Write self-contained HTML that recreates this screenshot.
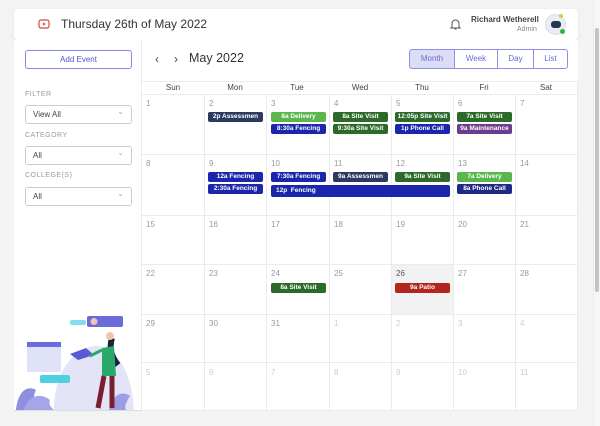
<!DOCTYPE html>
<html><head><style>
*{box-sizing:border-box;margin:0;padding:0}
body{width:600px;height:426px;background:#f3f3f3;font-family:"Liberation Sans",sans-serif;position:relative;overflow:hidden;color:#333}
.abs{position:absolute}
.hdr{left:14px;top:9px;width:564px;height:31px;background:#fff;border-radius:4px;box-shadow:0 1px 3px rgba(0,0,0,.08)}
.main{left:14px;top:40px;width:564px;height:371px;background:#fff}
.side{left:14px;top:40px;width:128px;height:371px;background:#fff;border-right:1px solid #ececec}
.lbl{font-size:7px;color:#999;letter-spacing:.5px}
.sel{width:107px;height:19px;border:1px solid #ccc;border-radius:3px;font-size:8px;padding:4px 7px;color:#444}
.sel:after{content:"⌄";position:absolute;right:7px;top:1px;color:#aaa;font-size:8px}
.vl{width:1px;background:#ebebeb}
.hl{height:1px;background:#ebebeb;left:142px;width:436px}
.dn{font-size:8px;color:#999}
.dn.o{color:#ccc}
.ev{height:10px;border-radius:2px;color:#fff;font-size:6.5px;font-weight:bold;text-align:center;line-height:10px;overflow:hidden;white-space:nowrap}
.g{background:#2b6a29}.lg{background:#5bb64e}.b{background:#1b26ad}.n{background:#2c3a5f}.p{background:#6c3d8e}.r{background:#b2261d}
.btn{top:49px;height:20px;border:1px solid #8f8fe6;font-size:8px;color:#6a6ad6;text-align:center;line-height:18px}
.dh{top:83px;font-size:8px;color:#444;width:62px;text-align:center}
</style></head><body>
<div class="abs hdr"></div>
<svg class="abs" style="left:38px;top:19px" width="12" height="10" viewBox="0 0 12 10"><rect x="1" y="1" width="10" height="8" rx="2" fill="none" stroke="#d9463e" stroke-width="1.2"/><path d="M5 3.3L7.6 5L5 6.7Z" fill="#d9463e"/></svg>
<div class="abs" style="left:61px;top:17px;font-size:12px;color:#333">Thursday 26th of May 2022</div>
<svg class="abs" style="left:450px;top:18px" width="11" height="12" viewBox="0 0 11 12"><path d="M2 9V5.5a3.5 3.5 0 0 1 7 0V9l1 1H1z M4.5 11h2" fill="none" stroke="#555" stroke-width="1"/></svg>
<div class="abs" style="left:471px;top:15px;font-size:8px;font-weight:bold;color:#444">Richard Wetherell</div>
<div class="abs" style="left:517px;top:26px;font-size:7px;color:#888">Admin</div>
<div class="abs" style="left:545px;top:14px;width:21px;height:21px;border-radius:50%;background:#e8eef2;border:1px solid #ddd"></div>
<div class="abs" style="left:551px;top:21px;width:10px;height:7px;border-radius:3px;background:#26364f"></div>
<div class="abs" style="left:559px;top:14px;width:4px;height:4px;border-radius:50%;background:#e6c53a"></div>
<div class="abs" style="left:560px;top:29px;width:5px;height:5px;border-radius:50%;background:#2bb34a"></div>
<div class="abs main"></div>
<div class="abs side"></div>
<div class="abs" style="left:25px;top:50px;width:107px;height:19px;border:1px solid #7f88e6;border-radius:3px;font-size:8px;color:#4a55d8;text-align:center;line-height:17px">Add Event</div>
<div class="abs lbl" style="left:25px;top:91px">FILTER</div>
<div class="abs sel" style="left:25px;top:105px">View All</div>
<div class="abs lbl" style="left:25px;top:132px">CATEGORY</div>
<div class="abs sel" style="left:25px;top:146px">All</div>
<div class="abs lbl" style="left:25px;top:172px">COLLEGE(S)</div>
<div class="abs sel" style="left:25px;top:187px">All</div>
<svg class="abs" style="left:14px;top:310px" width="128" height="101" viewBox="0 0 128 101">
<path d="M40 100C40 60 60 40 80 36C100 34 118 60 120 100Z" fill="#e4e4f8"/>
<path d="M2 100C4 80 14 75 22 80C18 88 20 95 30 100Z" fill="#8f8fe0"/>
<path d="M10 100C14 86 26 82 36 90C34 95 38 98 40 100Z" fill="#a5a5ea"/>
<path d="M95 100C98 85 108 80 116 86C112 92 110 97 112 100Z" fill="#9d9de6"/>
<rect x="73" y="6" width="36" height="11" rx="2" fill="#6b6bdc"/>
<circle cx="80" cy="11.5" r="3.5" fill="#f1c6a8"/>
<rect x="13" y="32" width="34" height="30" rx="2" fill="#dfe2f6"/>
<rect x="13" y="32" width="34" height="5" fill="#6b6bdc"/>
<rect x="26" y="65" width="30" height="8" rx="2" fill="#4dd0e1"/>
<rect x="56" y="10" width="16" height="5" rx="2" fill="#4dd0e1" opacity=".7"/>
<path d="M56 44L72 38L80 45L64 50Z" fill="#5a5ad6"/>
<path d="M98 28C94 40 100 50 104 55" stroke="#1f1f3a" stroke-width="6" fill="none"/>
<circle cx="96" cy="26" r="4" fill="#f1c6a8"/>
<path d="M88 38L100 36L102 66L88 66Z" fill="#2aa86a"/>
<path d="M88 40L76 46" stroke="#2aa86a" stroke-width="3"/>
<path d="M90 66L84 98M98 66L98 98" stroke="#7a1f2e" stroke-width="5"/>
<rect x="0" y="100" width="128" height="1" fill="#ddd"/>
</svg>
<div class="abs" style="left:155px;top:52px;font-size:12px;color:#444">‹</div>
<div class="abs" style="left:174px;top:52px;font-size:12px;color:#444">›</div>
<div class="abs" style="left:189px;top:51px;font-size:12.5px;color:#333">May 2022</div>
<div class="abs btn" style="left:409px;width:46px;background:#dcdcf6;border-radius:3px 0 0 3px">Month</div>
<div class="abs btn" style="left:454px;width:44px">Week</div>
<div class="abs btn" style="left:497px;width:37px">Day</div>
<div class="abs btn" style="left:533px;width:35px;border-radius:0 3px 3px 0">List</div>
<div class="abs hl" style="top:81px"></div>
<div class="abs hl" style="top:94px"></div>
<div class="abs hl" style="top:154px"></div>
<div class="abs hl" style="top:215px"></div>
<div class="abs hl" style="top:264px"></div>
<div class="abs hl" style="top:314px"></div>
<div class="abs hl" style="top:362px"></div>
<div class="abs hl" style="top:410px"></div>
<div class="abs" style="left:391px;top:265px;width:62px;height:49px;background:#f2f2f2"></div>
<div class="abs vl" style="left:204px;top:94px;height:317px"></div>
<div class="abs vl" style="left:266px;top:94px;height:317px"></div>
<div class="abs vl" style="left:329px;top:94px;height:317px"></div>
<div class="abs vl" style="left:391px;top:94px;height:317px"></div>
<div class="abs vl" style="left:453px;top:94px;height:317px"></div>
<div class="abs vl" style="left:515px;top:94px;height:317px"></div>
<div class="abs vl" style="left:577px;top:81px;height:330px"></div>
<div class="abs dh" style="left:142px">Sun</div><div class="abs dh" style="left:204px">Mon</div><div class="abs dh" style="left:266px">Tue</div><div class="abs dh" style="left:329px">Wed</div><div class="abs dh" style="left:391px">Thu</div><div class="abs dh" style="left:453px">Fri</div><div class="abs dh" style="left:515px">Sat</div>
<div class="abs dn" style="left:146px;top:99px">1</div><div class="abs dn" style="left:209px;top:99px">2</div><div class="abs dn" style="left:271px;top:99px">3</div><div class="abs dn" style="left:334px;top:99px">4</div><div class="abs dn" style="left:396px;top:99px">5</div><div class="abs dn" style="left:458px;top:99px">6</div><div class="abs dn" style="left:520px;top:99px">7</div>
<div class="abs dn" style="left:146px;top:159px">8</div><div class="abs dn" style="left:209px;top:159px">9</div><div class="abs dn" style="left:271px;top:159px">10</div><div class="abs dn" style="left:334px;top:159px">11</div><div class="abs dn" style="left:396px;top:159px">12</div><div class="abs dn" style="left:458px;top:159px">13</div><div class="abs dn" style="left:520px;top:159px">14</div>
<div class="abs dn" style="left:146px;top:220px">15</div><div class="abs dn" style="left:209px;top:220px">16</div><div class="abs dn" style="left:271px;top:220px">17</div><div class="abs dn" style="left:334px;top:220px">18</div><div class="abs dn" style="left:396px;top:220px">19</div><div class="abs dn" style="left:458px;top:220px">20</div><div class="abs dn" style="left:520px;top:220px">21</div>
<div class="abs dn" style="left:146px;top:269px">22</div><div class="abs dn" style="left:209px;top:269px">23</div><div class="abs dn" style="left:271px;top:269px">24</div><div class="abs dn" style="left:334px;top:269px">25</div><div class="abs dn" style="left:396px;top:269px;color:#555">26</div><div class="abs dn" style="left:458px;top:269px">27</div><div class="abs dn" style="left:520px;top:269px">28</div>
<div class="abs dn" style="left:146px;top:319px">29</div><div class="abs dn" style="left:209px;top:319px">30</div><div class="abs dn" style="left:271px;top:319px">31</div><div class="abs dn o" style="left:334px;top:319px">1</div><div class="abs dn o" style="left:396px;top:319px">2</div><div class="abs dn o" style="left:458px;top:319px">3</div><div class="abs dn o" style="left:520px;top:319px">4</div>
<div class="abs dn o" style="left:146px;top:368px">5</div><div class="abs dn o" style="left:209px;top:368px">6</div><div class="abs dn o" style="left:271px;top:368px">7</div><div class="abs dn o" style="left:334px;top:368px">8</div><div class="abs dn o" style="left:396px;top:368px">9</div><div class="abs dn o" style="left:458px;top:368px">10</div><div class="abs dn o" style="left:520px;top:368px">11</div>
<div class="abs ev n" style="left:208px;top:112px;width:55px">2p Assessmen</div>
<div class="abs ev lg" style="left:271px;top:112px;width:55px">8a Delivery</div>
<div class="abs ev b" style="left:271px;top:124px;width:55px">8:30a Fencing</div>
<div class="abs ev g" style="left:333px;top:112px;width:55px">8a Site Visit</div>
<div class="abs ev g" style="left:333px;top:124px;width:55px">9:30a Site Visit</div>
<div class="abs ev g" style="left:395px;top:112px;width:55px">12:05p Site Visit</div>
<div class="abs ev b" style="left:395px;top:124px;width:55px">1p Phone Call</div>
<div class="abs ev g" style="left:457px;top:112px;width:55px">7a Site Visit</div>
<div class="abs ev p" style="left:457px;top:124px;width:55px">9a Maintenance</div>
<div class="abs ev b" style="left:208px;top:172px;width:55px">12a Fencing</div>
<div class="abs ev b" style="left:208px;top:184px;width:55px">2:30a Fencing</div>
<div class="abs ev b" style="left:271px;top:172px;width:55px">7:30a Fencing</div>
<div class="abs ev b" style="left:271px;top:185px;width:179px;height:12px;line-height:12px;text-align:left;padding-left:5px">12p &nbsp;Fencing</div>
<div class="abs ev n" style="left:333px;top:172px;width:55px">9a Assessmen</div>
<div class="abs ev g" style="left:395px;top:172px;width:55px">9a Site Visit</div>
<div class="abs ev lg" style="left:457px;top:172px;width:55px">7a Delivery</div>
<div class="abs ev b" style="left:457px;top:184px;width:55px;background:#1e2a85">8a Phone Call</div>
<div class="abs ev g" style="left:271px;top:283px;width:55px">8a Site Visit</div>
<div class="abs ev r" style="left:395px;top:283px;width:55px">9a Patio</div>
<div class="abs" style="left:593px;top:0;width:7px;height:426px;background:#f7f7f7;border-left:1px solid #ececec"></div>
<div class="abs" style="left:595px;top:28px;width:4px;height:264px;background:#c4c4c4;border-radius:2px"></div>
</body></html>
